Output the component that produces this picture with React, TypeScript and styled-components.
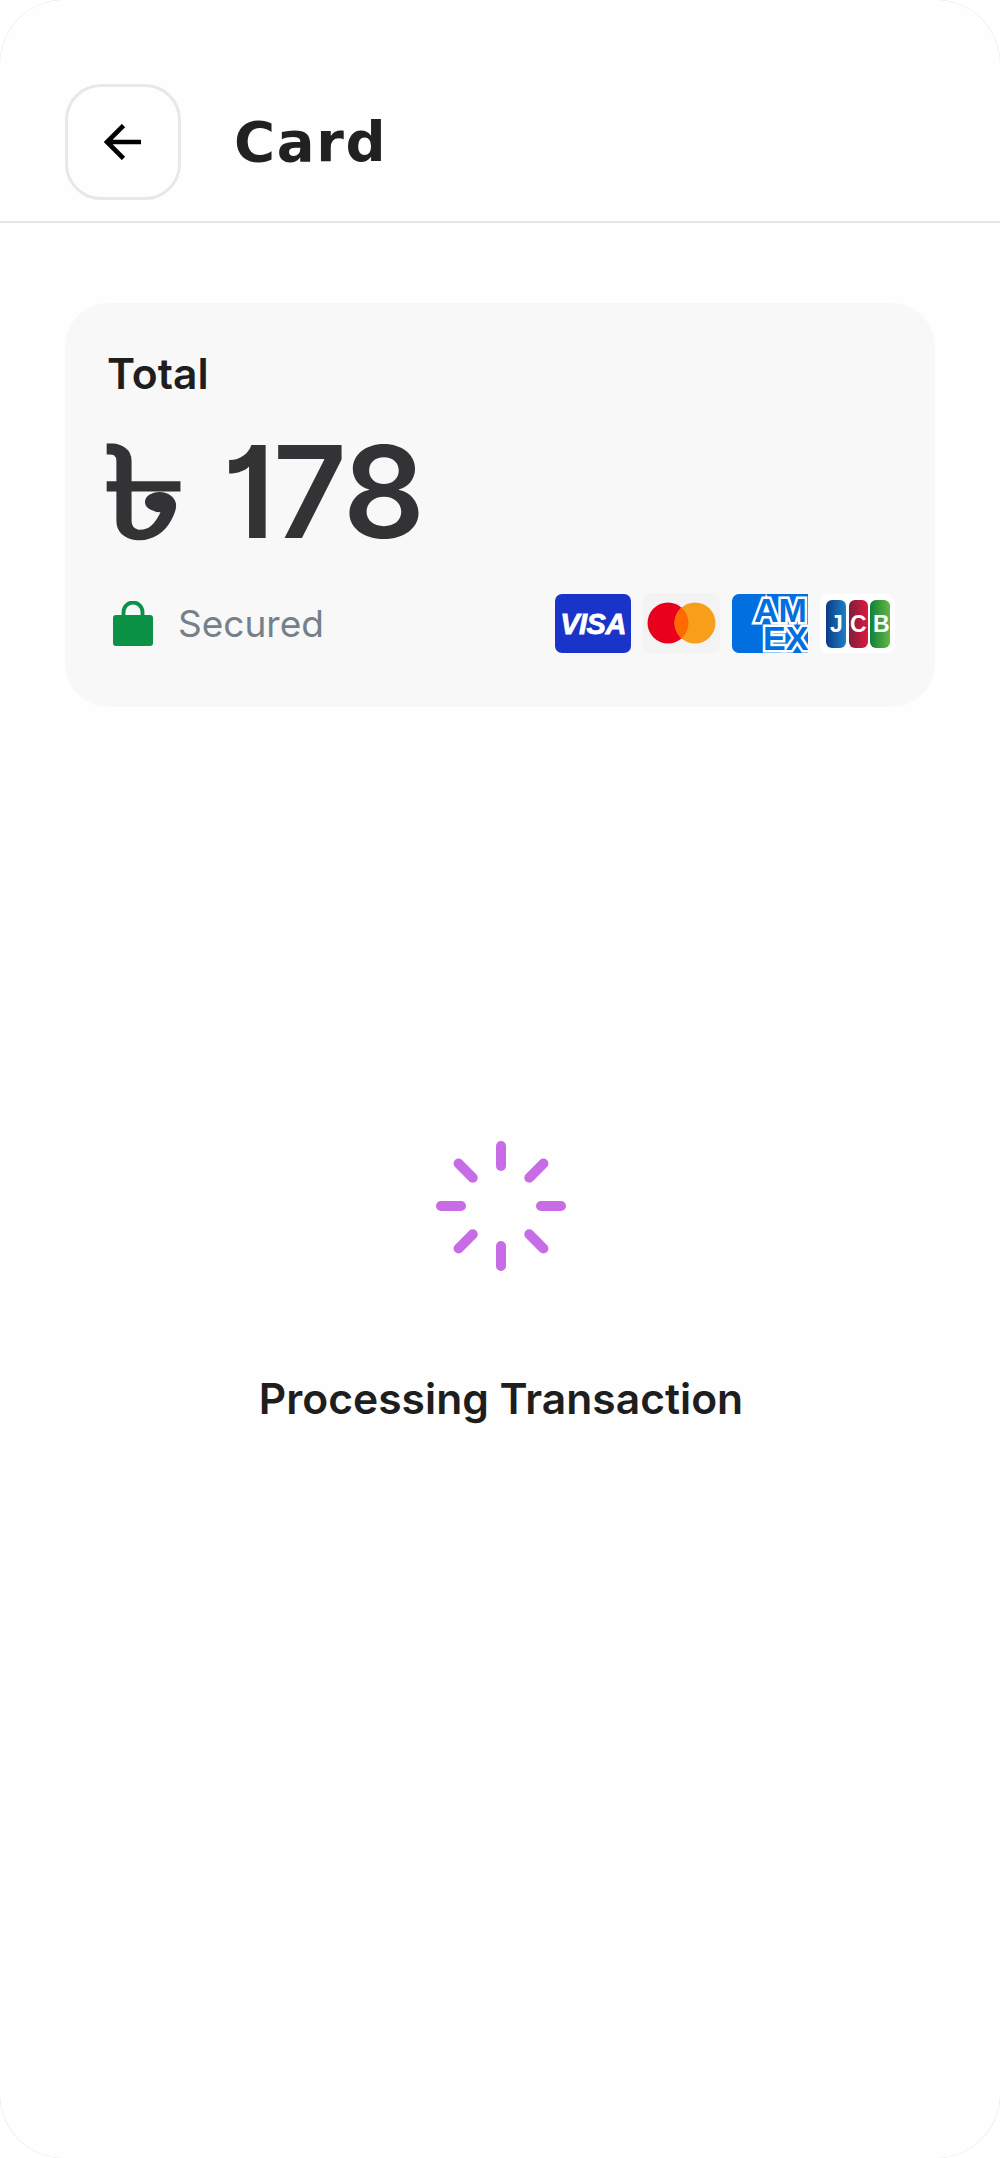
import React from "react";
import styled, { createGlobalStyle } from "styled-components";

const GlobalStyle = createGlobalStyle`
  html, body {
    margin: 0;
    padding: 0;
    background: #ffffff;
  }
  * {
    box-sizing: border-box;
  }
`;

const SPINNER_ANGLES = [0, 45, 90, 135, 180, 225, 270, 315];

const VisaLogo = () => (
  <svg width="76" height="59" viewBox="0 0 76 59">
    <rect width="76" height="59" rx="7" fill="#1a33c9" />
    <text x="38" y="40" textAnchor="middle" fontFamily="Liberation Sans" fontStyle="italic" fontWeight="700" fontSize="29" letterSpacing="-0.5" fill="#fff" stroke="#fff" strokeWidth="0.8">
      VISA
    </text>
  </svg>
);

const MastercardLogo = () => (
  <svg width="77" height="60" viewBox="0 0 77 60">
    <rect width="77" height="60" rx="8" fill="#f3f3f3" />
    <circle cx="25" cy="30" r="20.5" fill="#e8001c" />
    <circle cx="52" cy="30" r="20.5" fill="#f79e1b" />
    <path d="M38.5 14.6a20.5 20.5 0 0 1 0 30.8a20.5 20.5 0 0 1 0-30.8z" fill="#ff6a00" />
  </svg>
);

const AmexLogo = () => (
  <svg width="76" height="59" viewBox="0 0 76 59">
    <path d="M7 0H76V59H7a7 7 0 0 1-7-7V7a7 7 0 0 1 7-7z" fill="#016fdf" />
    <text x="22" y="28" fontFamily="Liberation Sans" fontWeight="700" fontSize="34" fill="#016fdf" stroke="#fff" strokeWidth="5" paintOrder="stroke">
      AM
    </text>
    <text x="31" y="56" fontFamily="Liberation Sans" fontWeight="700" fontSize="34" fill="#016fdf" stroke="#fff" strokeWidth="5" paintOrder="stroke">
      EX
    </text>
  </svg>
);

const JcbLogo = () => (
  <svg width="75" height="59" viewBox="0 0 75 59">
    <defs>
      <linearGradient id="jcbBlue" x1="0" x2="1" y1="0" y2="0">
        <stop offset="0" stopColor="#0d3b86" />
        <stop offset="1" stopColor="#1b7fc4" />
      </linearGradient>
      <linearGradient id="jcbRed" x1="0" x2="1" y1="0" y2="0">
        <stop offset="0" stopColor="#7c1f3c" />
        <stop offset="1" stopColor="#e0173f" />
      </linearGradient>
      <linearGradient id="jcbGreen" x1="0" x2="1" y1="0" y2="0">
        <stop offset="0" stopColor="#11803a" />
        <stop offset="1" stopColor="#62b742" />
      </linearGradient>
    </defs>
    <rect width="75" height="59" rx="8" fill="#fff" />
    <rect x="6" y="6" width="20" height="48" rx="6" fill="url(#jcbBlue)" />
    <rect x="29" y="6" width="19" height="48" rx="6" fill="url(#jcbRed)" />
    <rect x="50" y="6" width="20" height="48" rx="6" fill="url(#jcbGreen)" />
    <text x="10" y="38" fontFamily="Liberation Sans" fontWeight="700" fontSize="23" fill="#fff">
      J
    </text>
    <text x="30" y="38" fontFamily="Liberation Sans" fontWeight="700" fontSize="23" fill="#fff">
      C
    </text>
    <text x="53" y="38" fontFamily="Liberation Sans" fontWeight="700" fontSize="23" fill="#fff">
      B
    </text>
  </svg>
);

export default function App() {
  return (
    <Page>
      <GlobalStyle />
      <Header>
        <BackButton>
          <svg width="38" height="36" viewBox="0 0 38 36">
            <path d="M19.5 1.5L3 18L19.5 34.5M3 18H37" fill="none" stroke="#000" strokeWidth="4.6" />
          </svg>
        </BackButton>
        <Title>Card</Title>
      </Header>
      <TotalCard>
        <TotalLabel>Total</TotalLabel>
        <Amount>
          <TakaSign>৳</TakaSign>
          <span>178</span>
        </Amount>
        <FooterRow>
          <Secure>
            <svg width="40" height="45" viewBox="0 0 40 45">
              <path d="M10.5 17V11a9.5 9.5 0 0 1 19 0v6" fill="none" stroke="#0b9247" strokeWidth="3.8" />
              <rect y="14" width="40" height="31" rx="3" fill="#0b9247" />
            </svg>
            <SecureText>Secured</SecureText>
          </Secure>
          <Logos>
            <VisaLogo />
            <MastercardLogo />
            <AmexLogo />
            <JcbLogo />
          </Logos>
        </FooterRow>
      </TotalCard>
      <Processing>
        <svg width="130" height="130" viewBox="-65 -65 130 130">
          {SPINNER_ANGLES.map((angle) => (
            <line key={angle} x1="0" y1="-40" x2="0" y2="-60" stroke="#c86ce6" strokeWidth="10" strokeLinecap="round" transform={`rotate(${angle})`} />
          ))}
        </svg>
        <ProcessingText>Processing Transaction</ProcessingText>
      </Processing>
    </Page>
  );
}

const Page = styled.div`
  width: 1000px;
  height: 2158px;
  background: #fefefe;
  border-radius: 64px;
  box-shadow: 0 0 0 0.5px #e4e4e4;
  overflow: hidden;
  font-family: Inter, "Liberation Sans", sans-serif;
`;

const Header = styled.header`
  display: flex;
  align-items: center;
  gap: 53px;
  height: 223px;
  padding: 62px 65px 0;
  border-bottom: 2px solid #e6e6e6;
`;

const BackButton = styled.div`
  display: flex;
  align-items: center;
  justify-content: center;
  width: 116px;
  height: 116px;
  border: 3px solid #e8e8e8;
  border-radius: 36px;
`;

const Title = styled.h1`
  margin: 0;
  font-family: "DejaVu Sans", sans-serif;
  font-size: 56px;
  font-weight: 700;
  letter-spacing: 1.7px;
  color: #212121;
`;

const TotalCard = styled.section`
  display: flex;
  flex-direction: column;
  height: 404px;
  margin: 80px 65px 0;
  padding: 46px 40px 0 42px;
  background: #f8f8f8;
  border-radius: 44px;
`;

const TotalLabel = styled.div`
  font-size: 42.6px;
  font-weight: 600;
  line-height: 50px;
  color: #1e1e1e;
`;

const Amount = styled.div`
  display: flex;
  margin-top: 23px;
  font-size: 128px;
  font-weight: 600;
  font-feature-settings: "cv01";
  letter-spacing: -2px;
  line-height: 140px;
  color: #333336;
`;

const TakaSign = styled.span`
  display: block;
  width: 119px;
  margin-left: -4px;
  transform: scaleX(1.3);
  transform-origin: left center;
`;

const FooterRow = styled.div`
  display: flex;
  align-items: center;
  justify-content: space-between;
  margin-top: 31px;
`;

const Secure = styled.div`
  display: flex;
  align-items: center;
  gap: 25px;
  padding-left: 6px;
`;

const SecureText = styled.span`
  font-size: 37px;
  font-weight: 400;
  color: #74808a;
`;

const Logos = styled.div`
  display: flex;
  align-items: center;
  gap: 12px;
`;

const Processing = styled.section`
  display: flex;
  flex-direction: column;
  align-items: center;
  margin-top: 434px;
  padding-left: 2px;
`;

const ProcessingText = styled.div`
  margin-top: 103px;
  font-size: 42.6px;
  font-weight: 600;
  line-height: 50px;
  color: #1e1e1e;
`;
